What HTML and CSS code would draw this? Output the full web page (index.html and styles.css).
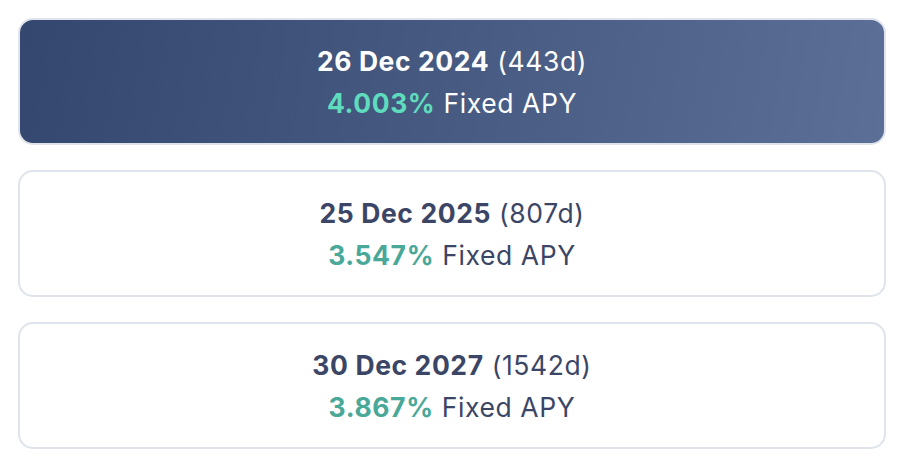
FILE: index.html
```html
<!DOCTYPE html>
<html>
<head>
<meta charset="utf-8">
<link rel="stylesheet" href="styles.css">
</head>
<body>
<div class="list">
  <div class="card active">
    <div class="date"><b>26 Dec 2024</b> (443d)</div>
    <div class="apy"><b class="pct">4.003%</b> Fixed APY</div>
  </div>
  <div class="card">
    <div class="date"><b>25 Dec 2025</b> (807d)</div>
    <div class="apy"><b class="pct">3.547%</b> Fixed APY</div>
  </div>
  <div class="card">
    <div class="date"><b>30 Dec 2027</b> (1542d)</div>
    <div class="apy"><b class="pct">3.867%</b> Fixed APY</div>
  </div>
</div>
</body>
</html>
```

FILE: styles.css
```css
html, body {
  margin: 0;
  background: #ffffff;
}
body {
  font-family: Inter, "Noto Sans", sans-serif;
}
.list {
  display: flex;
  flex-direction: column;
  gap: 25px;
  padding: 18px 14px 0 18px;
}
.card {
  box-sizing: border-box;
  height: 127px;
  border: 2px solid #dfe3ec;
  border-radius: 15px;
  background: #ffffff;
  color: #3b4666;
  display: flex;
  flex-direction: column;
  justify-content: center;
  align-items: center;
  font-size: 26.5px;
  letter-spacing: 0.6px;
  line-height: 42px;
}
.card b {
  font-weight: 700;
}
.card .pct {
  color: #49a898;
}
.card.active {
  background: linear-gradient(100deg, #34476f 0%, #465a82 50%, #5c7097 100%);
  color: #ffffff;
}
.card.active .pct {
  color: #5fdcbd;
}
```
